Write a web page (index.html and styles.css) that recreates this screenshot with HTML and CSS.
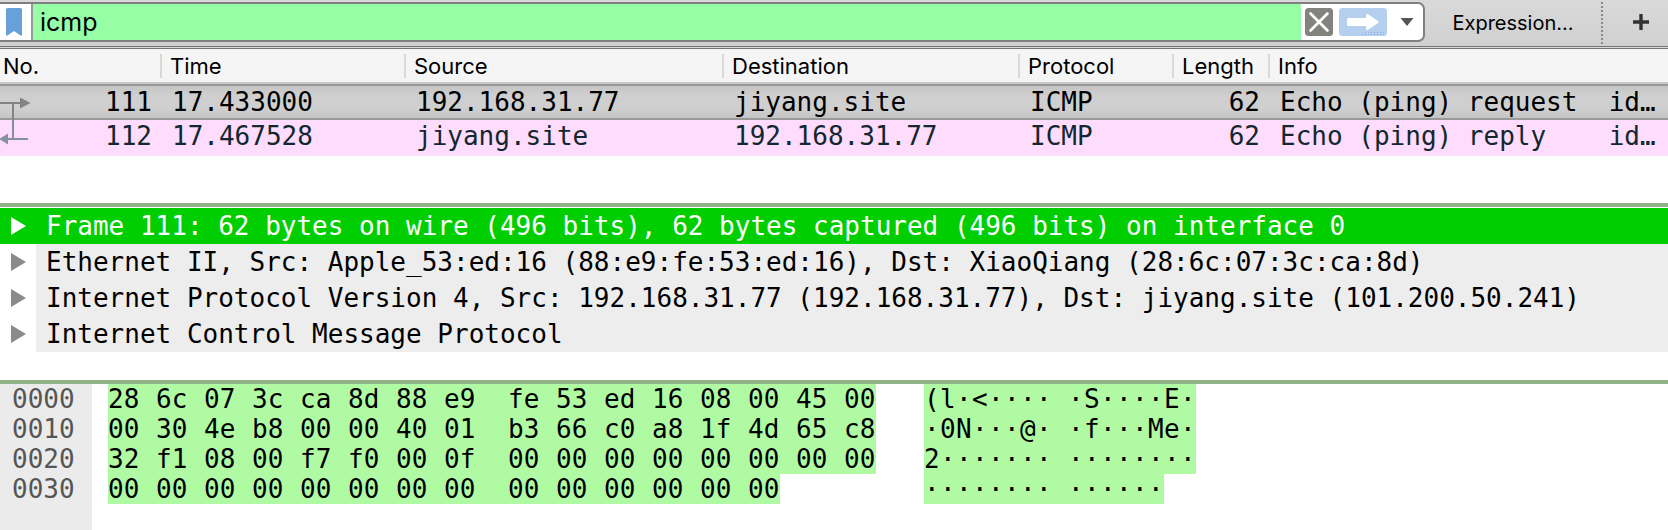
FILE: index.html
```html
<!DOCTYPE html>
<html lang="en">
<head>
<meta charset="utf-8">
<title>Packet capture</title>
<link rel="stylesheet" href="styles.css">
</head>
<body>
<div class="app">
  <header class="toolbar">
    <div class="filter">
      <button class="bookmark" type="button" aria-label="Filter bookmarks">
        <svg width="16" height="28" viewBox="0 0 16 28"><path d="M0 1.5Q0 0 1.5 0H14.500Q16 0 16 1.500V27.500H14.500L8 23L1.500 27.500H0Z" fill="#68a0da"/></svg>
      </button>
      <input class="filter-input" type="text" value="icmp" aria-label="Display filter">
      <div class="filter-actions">
        <button class="clear" type="button" aria-label="Clear filter">
          <svg width="28" height="28" viewBox="0 0 28 28"><rect width="28" height="28" rx="3.500" fill="#82827f"/><path d="M5.500 5.500L22.500 22.500M22.500 5.500L5.500 22.500" stroke="#fff" stroke-width="2.600" stroke-linecap="round"/></svg>
        </button>
        <button class="apply" type="button" aria-label="Apply filter">
          <svg width="48" height="28" viewBox="0 0 48 28"><rect width="48" height="28" rx="3.500" fill="#b5cfee"/><path d="M9.500 10H27V7Q27.500 5.500 29 6.200L39 13Q40.500 14 39 15L29 21.800Q27.500 22.500 27 21V18H9.500Q8 18 8 16.500V11.500Q8 10 9.500 10Z" fill="#fff"/><path d="M26 24.500H46M23 26.500H45" stroke="#8fb0e4" stroke-width="1" stroke-dasharray="1 2"/></svg>
        </button>
        <button class="history" type="button" aria-label="Filter history">
          <svg width="14" height="8" viewBox="0 0 14 8"><path d="M0.500 0H13.500L7 8Z" fill="#555"/></svg>
        </button>
      </div>
    </div>
    <button class="expression" type="button">Expression…</button>
    <button class="add" type="button" aria-label="Add filter button">
      <svg width="16" height="16" viewBox="0 0 16 16"><path d="M8 0V16M0 8H16" stroke="#333" stroke-width="3.400"/></svg>
    </button>
  </header>

  <section class="packets">
    <table class="packet-table">
      <colgroup><col class="c-no"><col class="c-time"><col class="c-src"><col class="c-dst"><col class="c-proto"><col class="c-len"><col></colgroup>
      <thead>
        <tr><th class="first"><span>No.</span></th><th><span>Time</span></th><th><span>Source</span></th><th><span>Destination</span></th><th><span>Protocol</span></th><th><span>Length</span></th><th><span>Info</span></th></tr>
      </thead>
      <tbody>
        <tr class="selected"><td class="num">111</td><td>17.433000</td><td>192.168.31.77</td><td>jiyang.site</td><td>ICMP</td><td class="num">62</td><td>Echo (ping) request  id…</td></tr>
        <tr class="reply"><td class="num">112</td><td>17.467528</td><td>jiyang.site</td><td>192.168.31.77</td><td>ICMP</td><td class="num">62</td><td>Echo (ping) reply    id…</td></tr>
      </tbody>
    </table>
    <svg class="related" width="32" height="72" viewBox="0 0 32 72"><path d="M0 19H22M13 19V55" fill="none" stroke="#838383" stroke-width="2"/><path d="M20 13.500L30.500 19L20 24.500Z" fill="#838383"/><path d="M13 37V55M6 55H28" fill="none" stroke="#84909f" stroke-width="2"/><path d="M8 49.500V60.500L-1 55Z" fill="#84909f"/></svg>
  </section>

  <ul class="details">
    <li class="current"><button type="button" aria-label="Expand Frame"><svg width="16" height="18" viewBox="0 0 16 18"><path d="M1 0L16 9L1 18Z"/></svg></button><span>Frame 111: 62 bytes on wire (496 bits), 62 bytes captured (496 bits) on interface 0</span></li>
    <li><button type="button" aria-label="Expand Ethernet"><svg width="16" height="18" viewBox="0 0 16 18"><path d="M1 0L16 9L1 18Z"/></svg></button><span>Ethernet II, Src: Apple_53:ed:16 (88:e9:fe:53:ed:16), Dst: XiaoQiang (28:6c:07:3c:ca:8d)</span></li>
    <li><button type="button" aria-label="Expand Internet Protocol"><svg width="16" height="18" viewBox="0 0 16 18"><path d="M1 0L16 9L1 18Z"/></svg></button><span>Internet Protocol Version 4, Src: 192.168.31.77 (192.168.31.77), Dst: jiyang.site (101.200.50.241)</span></li>
    <li><button type="button" aria-label="Expand ICMP"><svg width="16" height="18" viewBox="0 0 16 18"><path d="M1 0L16 9L1 18Z"/></svg></button><span>Internet Control Message Protocol</span></li>
  </ul>

  <section class="dump">
    <div class="offsets"><div>0000</div><div>0010</div><div>0020</div><div>0030</div></div>
    <div class="bytes">
      <div><i>28</i><i>6c</i><i>07</i><i>3c</i><i>ca</i><i>8d</i><i>88</i><i>e9</i><i>fe</i><i>53</i><i>ed</i><i>16</i><i>08</i><i>00</i><i>45</i><i>00</i></div>
      <div><i>00</i><i>30</i><i>4e</i><i>b8</i><i>00</i><i>00</i><i>40</i><i>01</i><i>b3</i><i>66</i><i>c0</i><i>a8</i><i>1f</i><i>4d</i><i>65</i><i>c8</i></div>
      <div><i>32</i><i>f1</i><i>08</i><i>00</i><i>f7</i><i>f0</i><i>00</i><i>0f</i><i>00</i><i>00</i><i>00</i><i>00</i><i>00</i><i>00</i><i>00</i><i>00</i></div>
      <div><i>00</i><i>00</i><i>00</i><i>00</i><i>00</i><i>00</i><i>00</i><i>00</i><i>00</i><i>00</i><i>00</i><i>00</i><i>00</i><i>00</i></div>
    </div>
    <div class="ascii">
      <div><i>(</i><i>l</i><i>·</i><i>&lt;</i><i>·</i><i>·</i><i>·</i><i>·</i><i>·</i><i>S</i><i>·</i><i>·</i><i>·</i><i>·</i><i>E</i><i>·</i></div>
      <div><i>·</i><i>0</i><i>N</i><i>·</i><i>·</i><i>·</i><i>@</i><i>·</i><i>·</i><i>f</i><i>·</i><i>·</i><i>·</i><i>M</i><i>e</i><i>·</i></div>
      <div><i>2</i><i>·</i><i>·</i><i>·</i><i>·</i><i>·</i><i>·</i><i>·</i><i>·</i><i>·</i><i>·</i><i>·</i><i>·</i><i>·</i><i>·</i><i>·</i></div>
      <div><i>·</i><i>·</i><i>·</i><i>·</i><i>·</i><i>·</i><i>·</i><i>·</i><i>·</i><i>·</i><i>·</i><i>·</i><i>·</i><i>·</i></div>
    </div>
  </section>
</div>
</body>
</html>
```

FILE: styles.css
```css
* { box-sizing: border-box; }

body {
  margin: 0;
  background: #fff;
  color: #000;
  font-family: "DejaVu Sans Mono", monospace;
  font-size: 26px;
}

button {
  margin: 0;
  padding: 0;
  border: 0;
  background: none;
  color: inherit;
  font: inherit;
  display: flex;
  align-items: center;
  justify-content: center;
}

svg { display: block; }

.app {
  display: flex;
  flex-direction: column;
  min-height: 100vh;
}

/* Filter toolbar */
.toolbar {
  display: flex;
  align-items: stretch;
  height: 49px;
  padding-top: 2px;
  background: linear-gradient(#d9d9d9, #d0d0d0);
  border-bottom: 3px double #737373;
  font-family: Inter, sans-serif;
}

.filter {
  flex: 1;
  display: flex;
  height: 40px;
  border: 2px solid #7f7f82;
  border-left: 0;
  border-radius: 0 7px 7px 0;
  background: #fff;
  overflow: hidden;
}

.bookmark {
  width: 33px;
  padding-right: 3px;
  border-right: 2px solid #9a9a9a;
}

.filter-input {
  flex: 1;
  min-width: 0;
  padding: 0 0 1px 7px;
  border: 0;
  outline: 0;
  background: #96ffa6;
  font: 25px Inter, sans-serif;
  color: #000;
}

.filter-actions {
  display: flex;
  gap: 6px;
  padding: 0 0 0 4px;
}

.history {
  width: 30px;
  padding-right: 2px;
}

.expression {
  width: 176px;
  height: 42px;
  font-size: 20px;
}

.add {
  width: 67px;
  height: 42px;
  padding: 0 0 2px 10px;
  border-left: 2px dotted #888;
}

/* Packet list */
.packets {
  position: relative;
  height: 154px;
}

.packet-table {
  width: 100%;
  table-layout: fixed;
  border-collapse: separate;
  border-spacing: 0;
}

.c-no { width: 160px; }
.c-time { width: 244px; }
.c-src { width: 318px; }
.c-dst { width: 296px; }
.c-proto { width: 154px; }
.c-len { width: 96px; }

th {
  height: 35px;
  padding: 0;
  background: #f5f5f5;
  border-bottom: 2px solid #c8c8c8;
  font: 22px Inter, sans-serif;
  text-align: left;
}

th span {
  display: block;
  padding-left: 8px;
  border-left: 2px solid #d9d9d9;
  line-height: 24px;
}

th.first span {
  padding-left: 3px;
  border-left: 0;
}

td {
  height: 36px;
  padding: 0 0 4px 12px;
  line-height: 32px;
  white-space: pre;
  overflow: hidden;
}

td.num {
  padding-right: 8px;
  text-align: right;
}

.selected td {
  padding-bottom: 0;
  line-height: 30px;
  border-top: 2px solid #999;
  border-bottom: 2px solid #999;
  background: linear-gradient(#c5c5c5, #cfcfcf 30%, #cfcfcf 70%, #c5c5c5);
}

.reply td {
  background: #fddcfe;
  color: #12272e;
}

.related {
  position: absolute;
  left: 0;
  top: 35px;
}

/* Packet details */
.details {
  margin: 0;
  padding: 1px 0 28px;
  border-top: 4px solid #8fb286;
  list-style: none;
  line-height: 36px;
}

.details li {
  display: flex;
  fill: #8b8b8b;
}

.details button {
  width: 36px;
  height: 36px;
}

.details span {
  flex: 1;
  padding-left: 10px;
  background: #ededed;
  white-space: pre;
}

.details .current {
  background: #00ce00;
  color: #fff;
  fill: #fff;
}

.details .current span { background: none; }

/* Byte dump */
.dump {
  flex: 1;
  display: flex;
  border-top: 4px solid #8fb286;
  line-height: 30px;
}

.dump i { font-style: normal; }

.offsets {
  width: 92px;
  margin-right: 16px;
  padding-left: 12px;
  background: #ebebeb;
  color: #555;
}

.bytes { width: 816px; }

.bytes > div,
.ascii > div {
  display: flex;
  width: max-content;
  background: #b0faa3;
}

.bytes i { width: 48px; }
.bytes i:nth-child(8) { width: 64px; }
.bytes i:last-child { width: 32px; }

.ascii i { width: 16px; }
.ascii i:nth-child(8) { width: 32px; }
```
